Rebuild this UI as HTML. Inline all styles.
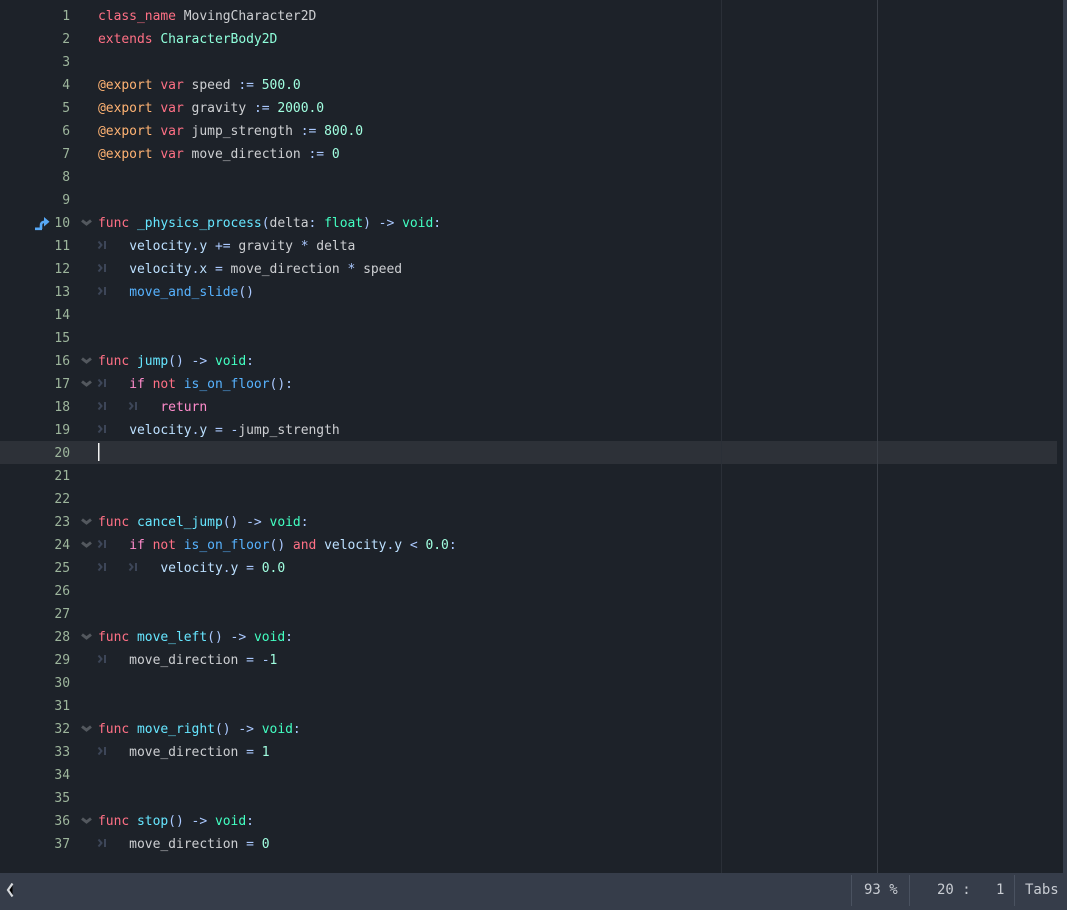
<!DOCTYPE html>
<html><head><meta charset="utf-8"><style>
html,body{margin:0;padding:0;width:1067px;height:910px;overflow:hidden;background:#1d2229}
body{position:relative;font-family:"DejaVu Sans Mono","Liberation Mono",monospace;font-size:13px}
.cur{position:absolute;left:0;top:441px;width:1057px;height:23px;background:#2d3138}
.g{position:absolute;top:0;width:1px;height:873px}
.sb{position:absolute;left:1063px;top:0;width:4px;height:873px;background:#363d4a}
.n,.l{position:absolute;height:23px;line-height:23px;white-space:pre}
.n{left:30px;width:40px;text-align:right;color:#9db59c;letter-spacing:-.03px}
.l{left:98px;color:#cdcfd2;letter-spacing:-.03px}
.k{color:#ff7085}.c{color:#ff8ccc}.a{color:#ffb373}.b{color:#42ffc2}.e{color:#8fffdb}.f{color:#57b3ff}.d{color:#66e6ff}.m{color:#bce0ff}.s{color:#abc9ff}.u{color:#a1ffe0}
svg{position:absolute;left:0;top:0;overflow:visible}
.bar{position:absolute;left:0;top:873px;width:1067px;height:37px;background:#363d4a;color:#c8ccd2;font-size:14px;line-height:35px;white-space:pre}
.bar span{position:absolute;top:0}
.bar i{position:absolute;top:2px;height:31px;width:1px;background:#4a5260}
</style></head><body>
<div class="cur"></div>
<div class="g" style="left:721px;background:#2a2f37"></div>
<div class="g" style="left:877px;background:#3a3f47"></div>
<div class="sb"></div>
<div class="n" style="top:5px">1</div><div class="l" style="top:5px"><span class="k">class_name</span> MovingCharacter2D</div>
<div class="n" style="top:28px">2</div><div class="l" style="top:28px"><span class="k">extends</span> <span class="e">CharacterBody2D</span></div>
<div class="n" style="top:51px">3</div>
<div class="n" style="top:74px">4</div><div class="l" style="top:74px"><span class="a">@export</span> <span class="k">var</span> speed <span class="s">:=</span> <span class="u">500.0</span></div>
<div class="n" style="top:97px">5</div><div class="l" style="top:97px"><span class="a">@export</span> <span class="k">var</span> gravity <span class="s">:=</span> <span class="u">2000.0</span></div>
<div class="n" style="top:120px">6</div><div class="l" style="top:120px"><span class="a">@export</span> <span class="k">var</span> jump_strength <span class="s">:=</span> <span class="u">800.0</span></div>
<div class="n" style="top:143px">7</div><div class="l" style="top:143px"><span class="a">@export</span> <span class="k">var</span> move_direction <span class="s">:=</span> <span class="u">0</span></div>
<div class="n" style="top:166px">8</div>
<div class="n" style="top:189px">9</div>
<div class="n" style="top:212px">10</div><div class="l" style="top:212px"><span class="k">func</span> <span class="d">_physics_process</span><span class="s">(</span>delta<span class="s">:</span> <span class="b">float</span><span class="s">) -&gt;</span> <span class="b">void</span><span class="s">:</span></div>
<div class="n" style="top:235px">11</div><div class="l" style="top:235px">    <span class="m">velocity</span><span class="s">.</span><span class="m">y</span> <span class="s">+=</span> gravity <span class="s">*</span> delta</div>
<div class="n" style="top:258px">12</div><div class="l" style="top:258px">    <span class="m">velocity</span><span class="s">.</span><span class="m">x</span> <span class="s">=</span> move_direction <span class="s">*</span> speed</div>
<div class="n" style="top:281px">13</div><div class="l" style="top:281px">    <span class="f">move_and_slide</span><span class="s">()</span></div>
<div class="n" style="top:304px">14</div>
<div class="n" style="top:327px">15</div>
<div class="n" style="top:350px">16</div><div class="l" style="top:350px"><span class="k">func</span> <span class="d">jump</span><span class="s">() -&gt;</span> <span class="b">void</span><span class="s">:</span></div>
<div class="n" style="top:373px">17</div><div class="l" style="top:373px">    <span class="c">if</span> <span class="k">not</span> <span class="f">is_on_floor</span><span class="s">():</span></div>
<div class="n" style="top:396px">18</div><div class="l" style="top:396px">        <span class="c">return</span></div>
<div class="n" style="top:419px">19</div><div class="l" style="top:419px">    <span class="m">velocity</span><span class="s">.</span><span class="m">y</span> <span class="s">= -</span>jump_strength</div>
<div class="n" style="top:442px">20</div>
<div class="n" style="top:465px">21</div>
<div class="n" style="top:488px">22</div>
<div class="n" style="top:511px">23</div><div class="l" style="top:511px"><span class="k">func</span> <span class="d">cancel_jump</span><span class="s">() -&gt;</span> <span class="b">void</span><span class="s">:</span></div>
<div class="n" style="top:534px">24</div><div class="l" style="top:534px">    <span class="c">if</span> <span class="k">not</span> <span class="f">is_on_floor</span><span class="s">()</span> <span class="k">and</span> <span class="m">velocity</span><span class="s">.</span><span class="m">y</span> <span class="s">&lt;</span> <span class="u">0.0</span><span class="s">:</span></div>
<div class="n" style="top:557px">25</div><div class="l" style="top:557px">        <span class="m">velocity</span><span class="s">.</span><span class="m">y</span> <span class="s">=</span> <span class="u">0.0</span></div>
<div class="n" style="top:580px">26</div>
<div class="n" style="top:603px">27</div>
<div class="n" style="top:626px">28</div><div class="l" style="top:626px"><span class="k">func</span> <span class="d">move_left</span><span class="s">() -&gt;</span> <span class="b">void</span><span class="s">:</span></div>
<div class="n" style="top:649px">29</div><div class="l" style="top:649px">    move_direction <span class="s">= -</span><span class="u">1</span></div>
<div class="n" style="top:672px">30</div>
<div class="n" style="top:695px">31</div>
<div class="n" style="top:718px">32</div><div class="l" style="top:718px"><span class="k">func</span> <span class="d">move_right</span><span class="s">() -&gt;</span> <span class="b">void</span><span class="s">:</span></div>
<div class="n" style="top:741px">33</div><div class="l" style="top:741px">    move_direction <span class="s">=</span> <span class="u">1</span></div>
<div class="n" style="top:764px">34</div>
<div class="n" style="top:787px">35</div>
<div class="n" style="top:810px">36</div><div class="l" style="top:810px"><span class="k">func</span> <span class="d">stop</span><span class="s">() -&gt;</span> <span class="b">void</span><span class="s">:</span></div>
<div class="n" style="top:833px">37</div><div class="l" style="top:833px">    move_direction <span class="s">=</span> <span class="u">0</span></div>

<svg width="1067" height="910" fill="none">
<defs>
<g id="t" stroke="#3d4658"><path d="M98.5 -3.5L101.5 0L98.5 3.5" stroke-width="2"/><path d="M105 -4V4" stroke-width="2"/></g>
<path id="v" d="M82 -1.5L86.5 2L91 -1.5" stroke="#53585e" stroke-width="3"/>
</defs>
<use href="#t" y="245"/><use href="#t" y="268"/><use href="#t" y="291"/><use href="#t" y="383"/><use href="#t" y="406"/><use href="#t" y="406" x="31"/><use href="#t" y="429"/><use href="#t" y="544"/><use href="#t" y="567"/><use href="#t" y="567" x="31"/><use href="#t" y="659"/><use href="#t" y="751"/><use href="#t" y="843"/>
<use href="#v" y="222"/><use href="#v" y="360"/><use href="#v" y="383"/><use href="#v" y="521"/><use href="#v" y="544"/><use href="#v" y="636"/><use href="#v" y="728"/><use href="#v" y="820"/>
<path d="M35 228.8H42M41 229V225.5C41 223 42 221.8 45 221.8" stroke="#57a8f5" stroke-width="2.6"/>
<path d="M44 217L49.5 221.8L44 226.5Z" fill="#57a8f5"/>
<rect x="98" y="443" width="1.5" height="18" fill="#f2f2f2"/>
</svg>

<div class="bar">
<svg width="12" height="16" style="left:5px;top:9px"><path d="M7.5 1.5L3 8L7.5 14.5" stroke="#d5d8dc" stroke-width="2.2"/></svg>
<i style="left:851px"></i><i style="left:909px"></i><i style="left:1014px"></i>
<span style="left:864px">93 %</span><span style="left:937px">20 :</span><span style="left:996px">1</span><span style="left:1025px">Tabs</span>
</div>
</body></html>
